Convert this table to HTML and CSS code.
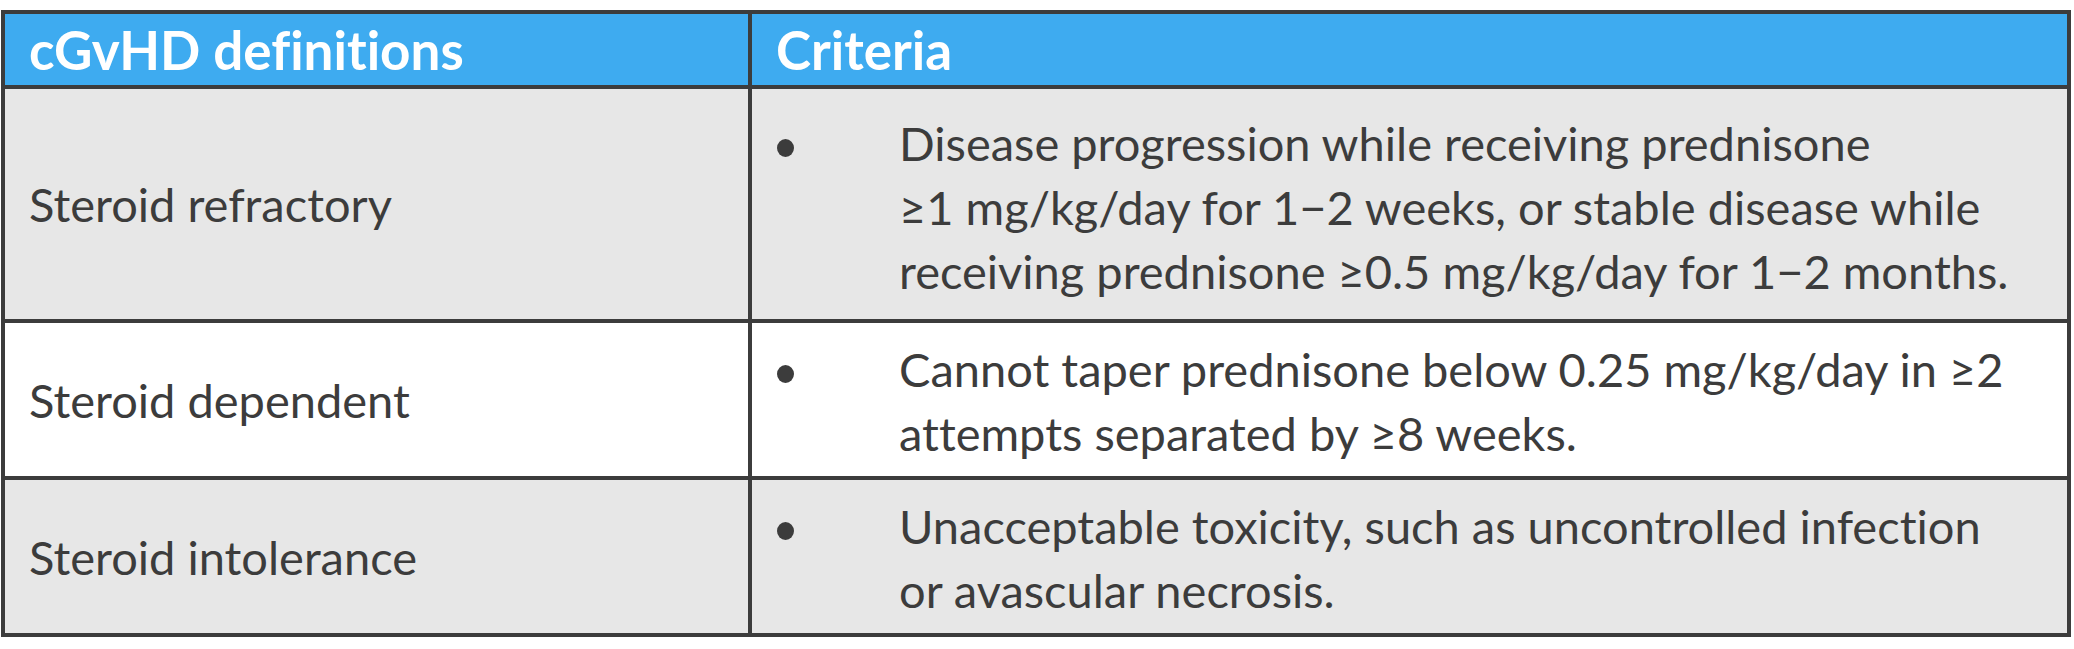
FILE: index.html
```html
<!DOCTYPE html>
<html lang="en">
<head>
<meta charset="utf-8">
<title>cGvHD definitions</title>
<link rel="stylesheet" href="styles.css">
</head>
<body>
<div class="wrap">
  <table class="defs">
    <thead>
      <tr>
        <th class="col-def">cGvHD definitions</th>
        <th class="col-crit">Criteria</th>
      </tr>
    </thead>
    <tbody>
      <tr class="row-shaded row-first">
        <td class="col-def">Steroid refractory</td>
        <td class="col-crit">
          <div class="item"><span class="bullet"></span><p class="item-text">Disease progression while receiving prednisone ≥1&nbsp;mg/kg/day for 1−2 weeks, or stable disease while receiving prednisone ≥0.5&nbsp;mg/kg/day for 1−2&nbsp;months.</p></div>
        </td>
      </tr>
      <tr class="row-plain">
        <td class="col-def">Steroid dependent</td>
        <td class="col-crit">
          <div class="item"><span class="bullet"></span><p class="item-text">Cannot taper prednisone below 0.25&nbsp;mg/kg/day in ≥2 attempts separated by ≥8&nbsp;weeks.</p></div>
        </td>
      </tr>
      <tr class="row-shaded row-last">
        <td class="col-def">Steroid intolerance</td>
        <td class="col-crit">
          <div class="item"><span class="bullet"></span><p class="item-text">Unacceptable toxicity, such as uncontrolled infection or avascular necrosis.</p></div>
        </td>
      </tr>
    </tbody>
  </table>
</div>
</body>
</html>
```

FILE: styles.css
```css
html, body {
  margin: 0;
  padding: 0;
  background: #ffffff;
}

.wrap {
  padding: 10px 3px 0 1px;
}

.defs {
  width: 100%;
  border-collapse: separate;
  border-spacing: 0;
  border: 4px solid #3c3c3c;
  font-family: "Lato", "Open Sans", sans-serif;
  font-variant-ligatures: none;
  color: #3c3c3c;
  table-layout: fixed;
}

.defs th,
.defs td {
  text-align: left;
  padding: 0 24px;
}

.defs th {
  background: #3eabf0;
  color: #ffffff;
  font-weight: 700;
  font-size: 53px;
  height: 71px;
  line-height: 71px;
  border-bottom: 4px solid #3c3c3c;
  vertical-align: middle;
}

.col-def {
  width: 695px;
  border-right: 4px solid #3c3c3c;
}

.col-crit {
  border-right: none !important;
}

.defs td {
  font-size: 47px;
  line-height: 64px;
  vertical-align: middle;
  border-bottom: 4px solid #3c3c3c;
}

.row-shaded td {
  background: #e7e7e7;
}

.row-plain td {
  background: #ffffff;
}

.row-last td {
  border-bottom: none;
}

.defs td.col-crit {
  padding: 14px 45px 11px 24px;
  vertical-align: top;
}

.row-first td.col-crit {
  padding-top: 22px;
  padding-bottom: 16px;
}

.item {
  display: flex;
  align-items: flex-start;
}

.bullet {
  flex: 0 0 auto;
  width: 17px;
  height: 18px;
  border-radius: 50%;
  background: #3c3c3c;
  margin-top: 28px;
  margin-left: 1px;
  margin-right: 105px;
}

.item-text {
  margin: 0;
  flex: 1 1 auto;
}
```
